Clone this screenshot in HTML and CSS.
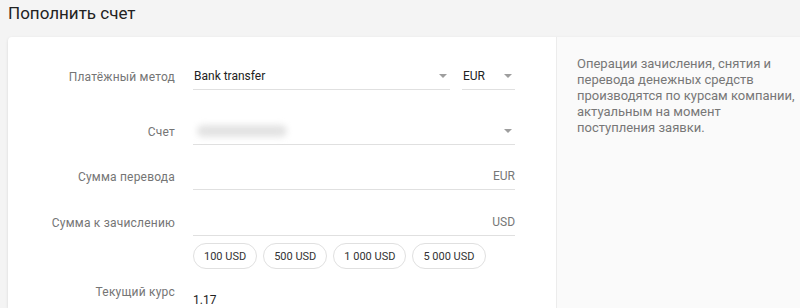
FILE: index.html
```html
<!DOCTYPE html>
<html lang="ru">
<head>
    <meta charset="UTF-8">
    <title>Пополнить счет</title>
    <link rel="stylesheet" href="styles.css">
</head>
<body>
    <h1 class="page-title">Пополнить счет</h1>

    <div class="card">
        <!-- Form -->
        <div class="form">
            <div class="row row-method">
                <label class="label">Платёжный метод</label>
                <div class="field-group">
                    <div class="field select wide">
                        <span class="value">Bank transfer</span>
                        <span class="caret"></span>
                    </div>
                    <div class="field select narrow">
                        <span class="value">EUR</span>
                        <span class="caret"></span>
                    </div>
                </div>
            </div>

            <div class="row row-account">
                <label class="label">Счет</label>
                <div class="field select">
                    <span class="blurred"></span>
                    <span class="caret"></span>
                </div>
            </div>

            <div class="row row-amount">
                <label class="label">Сумма перевода</label>
                <div class="field">
                    <span class="value"></span>
                    <span class="suffix">EUR</span>
                </div>
            </div>

            <div class="row row-credit">
                <label class="label">Сумма к зачислению</label>
                <div class="field">
                    <span class="value"></span>
                    <span class="suffix">USD</span>
                </div>
            </div>

            <div class="chips">
                <button class="chip">100 USD</button>
                <button class="chip">500 USD</button>
                <button class="chip">1 000 USD</button>
                <button class="chip">5 000 USD</button>
            </div>

            <div class="row row-rate">
                <label class="label">Текущий курс</label>
                <div class="rate">1.17</div>
            </div>
        </div>

        <!-- Info -->
        <div class="info">
            <p>Операции зачисления, снятия и перевода денежных средств производятся по курсам компании, актуальным на момент поступления заявки.</p>
        </div>
    </div>
</body>
</html>
```

FILE: styles.css
```css
html, body { overflow: hidden; }
body {
    font-family: Roboto, "Noto Sans", Arial, sans-serif;
    background-color: #f4f4f4;
    margin: 0;
    padding: 0 0 0 8px;
    height: 308px;
}
.page-title {
    font-size: 17px;
    font-weight: 400;
    color: #222;
    margin: 0;
    padding-top: 3px;
    line-height: 20px;
    height: 34px;
}
.card {
    display: flex;
    width: 830px;
    height: 271px;
    background-color: #fff;
    border-radius: 4px 4px 0 0;
    box-shadow: 0 1px 3px rgba(0, 0, 0, 0.12);
}
.form {
    width: 548px;
    flex-shrink: 0;
    padding-top: 26px;
    box-sizing: border-box;
}
.info {
    flex: 1;
    background-color: #fafafa;
    border-left: 1px solid #ececec;
    padding: 19px 0 0 20px;
}
.info p {
    margin: 0;
    width: 220px;
    font-size: 13px;
    line-height: 16px;
    color: #777;
}
.row {
    display: flex;
    align-items: center;
}
.label {
    width: 167px;
    flex-shrink: 0;
    text-align: right;
    font-size: 12px;
    color: #757575;
    margin-right: 18px;
    letter-spacing: 0.2px;
}
.field-group { display: flex; gap: 12px; }
.field {
    display: flex;
    align-items: center;
    width: 322px;
    height: 26px;
    border-bottom: 1px solid #e0e0e0;
}
.field.wide { width: 257px; }
.field.narrow { width: 53px; }
.value {
    flex: 1;
    font-size: 12px;
    color: #222;
    padding-left: 1px;
}
.suffix {
    font-size: 12px;
    color: #777;
}
.caret {
    width: 0;
    height: 0;
    border-left: 4px solid transparent;
    border-right: 4px solid transparent;
    border-top: 4px solid #9e9e9e;
    margin-right: 3px;
}
.blurred {
    flex: 1;
    display: flex;
}
.blurred::before {
    content: "";
    display: block;
    width: 90px;
    height: 12px;
    margin-left: 4px;
    background-color: #e3e3e3;
    border-radius: 6px;
    filter: blur(3px);
}
.row-account { margin-top: 28px; }
.row-amount { margin-top: 18px; }
.row-credit { margin-top: 19px; }
.chips {
    display: flex;
    gap: 6px;
    margin: 7px 0 0 185px;
}
.chip {
    font-family: inherit;
    font-size: 11px;
    color: #333;
    background-color: #fff;
    border: 1px solid #e0e0e0;
    border-radius: 13px;
    height: 26px;
    padding: 0 10px;
    cursor: pointer;
}
.row-rate {
    margin-top: 16px;
    align-items: flex-start;
}
.rate {
    font-size: 12px;
    color: #222;
    margin-top: 8px;
}
```
